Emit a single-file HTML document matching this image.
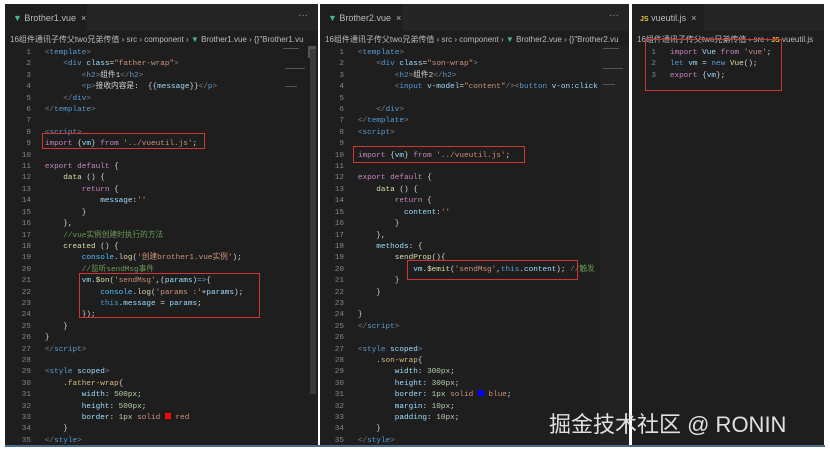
<!DOCTYPE html>
<html><head><meta charset="utf-8"><style>
*{margin:0;padding:0;box-sizing:border-box}
body{width:830px;height:452px;background:#fff;position:relative;overflow:hidden;font-family:"Liberation Mono","Noto Sans CJK SC",monospace}
.p{position:absolute;top:4px;height:442px;background:#1e1e1e;overflow:hidden}
.tabs{position:absolute;left:0;right:0;top:0;height:27px;background:#252526}
.tab{position:absolute;left:0;top:0;height:27px;background:#1e1e1e;color:#bbb;font:9px "Liberation Sans","Noto Sans CJK SC",sans-serif;padding:9px 0 0 8px;white-space:nowrap}
.dots{position:absolute;right:10px;top:6px;color:#999;font:10px "Liberation Sans",sans-serif}
.bc{position:absolute;left:5px;top:30px;color:#bbb;font:8px "Liberation Sans","Noto Sans CJK SC",sans-serif;white-space:nowrap}
.code{position:absolute;top:44px;left:2px;font-size:7.7px;line-height:11.4px;white-space:pre;color:#d4d4d4}
.n{display:inline-block;color:#858585;text-align:right}
.t{color:#569cd6}.g{color:#808080}.a{color:#9cdcfe}.s{color:#ce9178}.k{color:#c586c0}.f{color:#dcdcaa}.c{color:#6a9955}.m{color:#b5cea8}.b{color:#4fc1ff}.cl{color:#d7ba7d}
.box{position:absolute;border:1px solid #d03535}
.vue{color:#41b883}
.sb{position:absolute;background:#3a3a3a}
.mm{position:absolute;background:#555;height:1px}
</style></head><body>

<div class="p" style="left:5px;width:313px">
 <div class="tabs"><div class="tab" style="width:82px"><span class="vue">▼</span> Brother1.vue &nbsp;×</div><div class="dots">···</div></div>
 <div class="bc">16组件通讯子传父two兄弟传值 › src › component › <span class="vue">▼</span> Brother1.vue › {}"Brother1.vu</div>
 <div class="code"><span class="n" style="width:24px">1</span>   <span class="g">&lt;</span><span class="t">template</span><span class="g">&gt;</span>
<span class="n" style="width:24px">2</span>       <span class="g">&lt;</span><span class="t">div</span> <span class="a">class</span>=<span class="s">"father-wrap"</span><span class="g">&gt;</span>
<span class="n" style="width:24px">3</span>           <span class="g">&lt;</span><span class="t">h2</span><span class="g">&gt;</span>组件1<span class="g">&lt;/</span><span class="t">h2</span><span class="g">&gt;</span>
<span class="n" style="width:24px">4</span>           <span class="g">&lt;</span><span class="t">p</span><span class="g">&gt;</span>接收内容是:  {{<span class="a">message</span>}}<span class="g">&lt;/</span><span class="t">p</span><span class="g">&gt;</span>
<span class="n" style="width:24px">5</span>       <span class="g">&lt;/</span><span class="t">div</span><span class="g">&gt;</span>
<span class="n" style="width:24px">6</span>   <span class="g">&lt;/</span><span class="t">template</span><span class="g">&gt;</span>
<span class="n" style="width:24px">7</span>
<span class="n" style="width:24px">8</span>   <span class="g">&lt;</span><span class="t">script</span><span class="g">&gt;</span>
<span class="n" style="width:24px">9</span>   <span class="k">import</span> {<span class="a">vm</span>} <span class="k">from</span> <span class="s">'../vueutil.js'</span>;
<span class="n" style="width:24px">10</span>
<span class="n" style="width:24px">11</span>   <span class="k">export</span> <span class="k">default</span> {
<span class="n" style="width:24px">12</span>       <span class="f">data</span> () {
<span class="n" style="width:24px">13</span>           <span class="k">return</span> {
<span class="n" style="width:24px">14</span>               <span class="a">message</span>:<span class="s">''</span>
<span class="n" style="width:24px">15</span>           }
<span class="n" style="width:24px">16</span>       },
<span class="n" style="width:24px">17</span>       <span class="c">//vue实例创建时执行的方法</span>
<span class="n" style="width:24px">18</span>       <span class="f">created</span> () {
<span class="n" style="width:24px">19</span>           <span class="b">console</span>.<span class="f">log</span>(<span class="s">'创建brother1.vue实例'</span>);
<span class="n" style="width:24px">20</span>           <span class="c">//监听sendMsg事件</span>
<span class="n" style="width:24px">21</span>           <span class="a">vm</span>.<span class="f">$on</span>(<span class="s">'sendMsg'</span>,(<span class="a">params</span>)<span class="t">=&gt;</span>{
<span class="n" style="width:24px">22</span>               <span class="b">console</span>.<span class="f">log</span>(<span class="s">'params :'</span>+<span class="a">params</span>);
<span class="n" style="width:24px">23</span>               <span class="t">this</span>.<span class="a">message</span> = <span class="a">params</span>;
<span class="n" style="width:24px">24</span>           });
<span class="n" style="width:24px">25</span>       }
<span class="n" style="width:24px">26</span>   }
<span class="n" style="width:24px">27</span>   <span class="g">&lt;/</span><span class="t">script</span><span class="g">&gt;</span>
<span class="n" style="width:24px">28</span>
<span class="n" style="width:24px">29</span>   <span class="g">&lt;</span><span class="t">style</span> <span class="a">scoped</span><span class="g">&gt;</span>
<span class="n" style="width:24px">30</span>       <span class="cl">.father-wrap</span>{
<span class="n" style="width:24px">31</span>           <span class="a">width</span>: <span class="m">500px</span>;
<span class="n" style="width:24px">32</span>           <span class="a">height</span>: <span class="m">500px</span>;
<span class="n" style="width:24px">33</span>           <span class="a">border</span>: <span class="m">1px</span> <span class="s">solid</span> <span style="display:inline-block;width:6px;height:6px;background:#f00"></span> <span class="s">red</span>
<span class="n" style="width:24px">34</span>       }
<span class="n" style="width:24px">35</span>   <span class="g">&lt;/</span><span class="t">style</span><span class="g">&gt;</span></div>
 <div class="sb" style="left:303px;top:42px;width:8px;height:12px;background:#555"></div>
 <div class="sb" style="left:305px;top:45px;width:6px;height:345px"></div>
 <div class="mm" style="left:278px;top:44px;width:16px"></div><div class="mm" style="left:280px;top:64px;width:20px"></div><div class="mm" style="left:280px;top:82px;width:12px"></div>
 <div class="box" style="left:37px;top:129px;width:163px;height:16px"></div>
 <div class="box" style="left:74px;top:269px;width:181px;height:45px"></div>
</div>

<div class="p" style="left:320px;width:309px">
 <div class="tabs"><div class="tab" style="width:82px"><span class="vue">▼</span> Brother2.vue &nbsp;×</div><div class="dots">···</div></div>
 <div class="bc">16组件通讯子传父two兄弟传值 › src › component › <span class="vue">▼</span> Brother2.vue › {}"Brother2.vu</div>
 <div class="code"><span class="n" style="width:22px">1</span>   <span class="g">&lt;</span><span class="t">template</span><span class="g">&gt;</span>
<span class="n" style="width:22px">2</span>       <span class="g">&lt;</span><span class="t">div</span> <span class="a">class</span>=<span class="s">"son-wrap"</span><span class="g">&gt;</span>
<span class="n" style="width:22px">3</span>           <span class="g">&lt;</span><span class="t">h2</span><span class="g">&gt;</span>组件2<span class="g">&lt;/</span><span class="t">h2</span><span class="g">&gt;</span>
<span class="n" style="width:22px">4</span>           <span class="g">&lt;</span><span class="t">input</span> <span class="a">v-model</span>=<span class="s">"content"</span><span class="g">/&gt;&lt;</span><span class="t">button</span> <span class="a">v-on:click</span>
<span class="n" style="width:22px">5</span>
<span class="n" style="width:22px">6</span>       <span class="g">&lt;/</span><span class="t">div</span><span class="g">&gt;</span>
<span class="n" style="width:22px">7</span>   <span class="g">&lt;/</span><span class="t">template</span><span class="g">&gt;</span>
<span class="n" style="width:22px">8</span>   <span class="g">&lt;</span><span class="t">script</span><span class="g">&gt;</span>
<span class="n" style="width:22px">9</span>
<span class="n" style="width:22px">10</span>   <span class="k">import</span> {<span class="a">vm</span>} <span class="k">from</span> <span class="s">'../vueutil.js'</span>;
<span class="n" style="width:22px">11</span>
<span class="n" style="width:22px">12</span>   <span class="k">export</span> <span class="k">default</span> {
<span class="n" style="width:22px">13</span>       <span class="f">data</span> () {
<span class="n" style="width:22px">14</span>           <span class="k">return</span> {
<span class="n" style="width:22px">15</span>             <span class="a">content</span>:<span class="s">''</span>
<span class="n" style="width:22px">16</span>           }
<span class="n" style="width:22px">17</span>       },
<span class="n" style="width:22px">18</span>       <span class="a">methods</span>: {
<span class="n" style="width:22px">19</span>           <span class="f">sendProp</span>(){
<span class="n" style="width:22px">20</span>               <span class="a">vm</span>.<span class="f">$emit</span>(<span class="s">'sendMsg'</span>,<span class="t">this</span>.<span class="a">content</span>); <span class="c">//触发</span>
<span class="n" style="width:22px">21</span>           }
<span class="n" style="width:22px">22</span>       }
<span class="n" style="width:22px">23</span>
<span class="n" style="width:22px">24</span>   }
<span class="n" style="width:22px">25</span>   <span class="g">&lt;/</span><span class="t">script</span><span class="g">&gt;</span>
<span class="n" style="width:22px">26</span>
<span class="n" style="width:22px">27</span>   <span class="g">&lt;</span><span class="t">style</span> <span class="a">scoped</span><span class="g">&gt;</span>
<span class="n" style="width:22px">28</span>       <span class="cl">.son-wrap</span>{
<span class="n" style="width:22px">29</span>           <span class="a">width</span>: <span class="m">300px</span>;
<span class="n" style="width:22px">30</span>           <span class="a">height</span>: <span class="m">300px</span>;
<span class="n" style="width:22px">31</span>           <span class="a">border</span>: <span class="m">1px</span> <span class="s">solid</span> <span style="display:inline-block;width:6px;height:6px;background:#00f"></span> <span class="s">blue</span>;
<span class="n" style="width:22px">32</span>           <span class="a">margin</span>: <span class="m">10px</span>;
<span class="n" style="width:22px">33</span>           <span class="a">padding</span>: <span class="m">10px</span>;
<span class="n" style="width:22px">34</span>       }
<span class="n" style="width:22px">35</span>   <span class="g">&lt;/</span><span class="t">style</span><span class="g">&gt;</span></div>
 <div style="position:absolute;left:280px;top:42px;width:29px;height:400px;background:#222"></div>
 <div class="mm" style="left:283px;top:44px;width:16px"></div><div class="mm" style="left:283px;top:64px;width:20px"></div><div class="mm" style="left:283px;top:80px;width:12px"></div>
 <div class="box" style="left:33px;top:142px;width:172px;height:17px"></div>
 <div class="box" style="left:87px;top:256px;width:171px;height:20px"></div>
</div>

<div class="p" style="left:632px;width:192px">
 <div class="tabs"><div class="tab" style="width:72px"><span style="color:#e8c33a;font-size:7px;font-weight:bold">JS</span> vueutil.js &nbsp;×</div></div>
 <div class="bc">16组件通讯子传父two兄弟传值 › src › <span style="color:#e8c33a;font-size:7px;font-weight:bold">JS</span> vueutil.js</div>
 <div class="code"><span class="n" style="width:22px">1</span>   <span class="k">import</span> <span class="a">Vue</span> <span class="k">from</span> <span class="s">'vue'</span>;
<span class="n" style="width:22px">2</span>   <span class="t">let</span> <span class="a">vm</span> = <span class="t">new</span> <span class="f">Vue</span>();
<span class="n" style="width:22px">3</span>   <span class="k">export</span> {<span class="a">vm</span>};</div>
 <div class="box" style="left:13px;top:35px;width:137px;height:52px"></div>
</div>
<div style="position:absolute;left:549px;top:407px;color:#e0e0e0;font:22px 'Liberation Sans','Noto Sans CJK SC',sans-serif;white-space:nowrap">掘金技术社区 @ RONIN</div>
<div style="position:absolute;left:5px;top:445px;width:820px;height:2px;background:#4a6a8a"></div>
</body></html>
